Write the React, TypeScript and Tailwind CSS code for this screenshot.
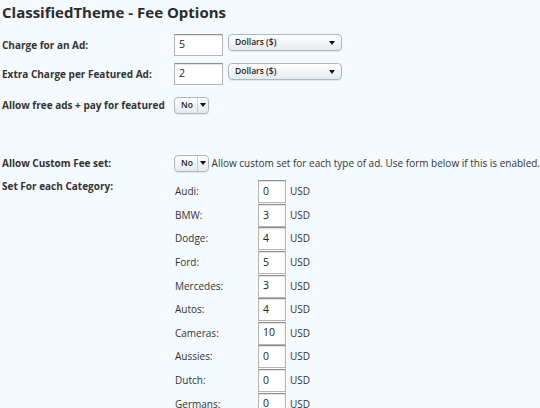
import type { ReactNode } from "react";

const CATEGORIES: { name: string; fee: string }[] = [
  { name: "Audi", fee: "0" },
  { name: "BMW", fee: "3" },
  { name: "Dodge", fee: "4" },
  { name: "Ford", fee: "5" },
  { name: "Mercedes", fee: "3" },
  { name: "Autos", fee: "4" },
  { name: "Cameras", fee: "10" },
  { name: "Aussies", fee: "0" },
  { name: "Dutch", fee: "0" },
  { name: "Germans", fee: "0" }
];

const font = { fontFamily: '"Open Sans", "Noto Sans", sans-serif' };

function Label({ children }: { children: ReactNode }) {
  return <div className="w-[172px] shrink-0 text-[10px] font-bold whitespace-nowrap text-[#333]">{children}</div>;
}

function TextBox({ value, className = "" }: { value: string; className?: string }) {
  return (
    <div
      className={`flex items-center border border-[#b4b4b4] border-t-[#8f8f8f] bg-white px-[4px] text-[10.5px] text-[#222] shadow-[inset_0_1px_1px_rgba(0,0,0,0.12)] ${className}`}
    >
      {value}
    </div>
  );
}

function Caret() {
  return (
    <svg className="h-[4px] w-[6px]" viewBox="0 0 6 4">
      <path d="M0 0h6L3 4z" fill="#111" />
    </svg>
  );
}

function Select({ value, wide }: { value: string; wide?: boolean }) {
  if (wide) {
    return (
      <div className="flex h-[17px] w-[114px] items-center justify-between rounded-[4px] border border-[#a9b8c6] bg-[linear-gradient(#ffffff,#e6eaee)] pr-[6px] pl-[6px] text-[8.5px] font-semibold text-[#222] shadow-[0_1px_1px_rgba(0,0,0,0.08)]">
        <span>{value}</span>
        <Caret />
      </div>
    );
  }
  return (
    <div className="flex h-[17px] w-[35px] items-center rounded-[4px] border border-[#a9b8c6] bg-[linear-gradient(#ffffff,#e6eaee)] text-[8.5px] font-semibold text-[#222] shadow-[0_1px_1px_rgba(0,0,0,0.08)]">
      <span className="w-[22px] pl-[6px]">{value}</span>
      <span className="flex h-full flex-1 items-center justify-center border-l border-[#c8d0d8]">
        <Caret />
      </span>
    </div>
  );
}

export default function App() {
  return (
    <div className="h-[408px] w-[540px] overflow-hidden bg-[#f4fafd] pl-[2px] text-[#333]" style={font}>
      <h1 className="h-[24px] text-[15px] leading-[24px] font-bold text-[#2b2b2b]">ClassifiedTheme - Fee Options</h1>

      <div className="mt-[10px] flex h-[22px] items-center">
        <Label>Charge for an Ad:</Label>
        <TextBox value="5" className="h-[22px] w-[49px]" />
        <div className="ml-[5px] self-start">
          <Select value="Dollars ($)" wide />
        </div>
      </div>

      <div className="mt-[7px] flex h-[22px] items-center">
        <Label>Extra Charge per Featured Ad:</Label>
        <TextBox value="2" className="h-[22px] w-[49px]" />
        <div className="ml-[5px] self-start">
          <Select value="Dollars ($)" wide />
        </div>
      </div>

      <div className="mt-[11px] flex h-[18px] items-center">
        <Label>Allow free ads + pay for featured</Label>
        <Select value="No" />
      </div>

      <div className="mt-[40px] flex h-[18px] items-center">
        <Label>Allow Custom Fee set:</Label>
        <Select value="No" />
        <span className="ml-[3px] text-[10px] whitespace-nowrap text-[#333]">
          Allow custom set for each type of ad. Use form below if this is enabled.
        </span>
      </div>

      <div className="mt-[8px] flex">
        <div className="leading-[12px]">
          <Label>Set For each Category:</Label>
        </div>
        <div className="flex flex-col">
          {CATEGORIES.map((c) => (
            <div key={c.name} className="flex h-[23.6px] shrink-0 items-center">
              <span className="w-[84px] pl-[1px] text-[10px] text-[#333]">{c.name}:</span>
              <TextBox value={c.fee} className="h-[23px] w-[28px]" />
              <span className="ml-[4px] text-[10px] text-[#333]">USD</span>
            </div>
          ))}
        </div>
      </div>
    </div>
  );
}
